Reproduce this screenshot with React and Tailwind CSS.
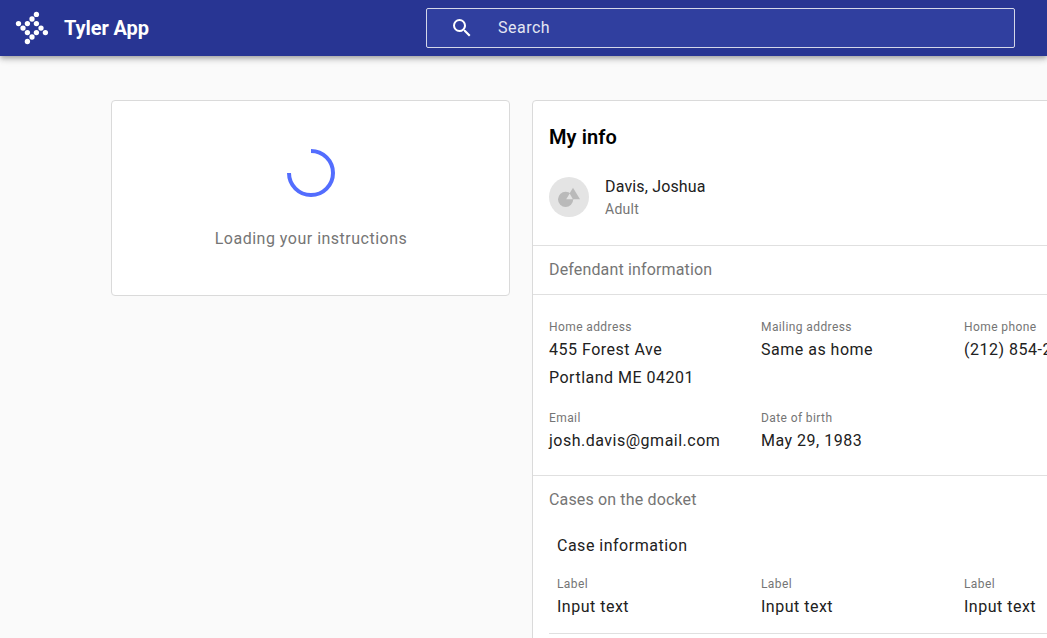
const DOTS = [
  [36.4, 14.4], [32, 19], [18.5, 23.6], [27.4, 23.6], [36.4, 23.6], [23, 28.1],
  [41, 28.1], [27.4, 32.6], [36.4, 32.6], [45.4, 32.6], [32, 37], [27.4, 41.5],
];

function Logo() {
  return (
    <svg className="size-8 shrink-0 overflow-visible" viewBox="16 12 32 32" fill="#fff">
      {DOTS.map(([x, y]) => (
        <circle key={`${x}-${y}`} cx={x} cy={y} r="2.65" />
      ))}
    </svg>
  );
}

function Field({ label, lines }) {
  return (
    <div className="whitespace-nowrap">
      <div className="text-[12px] leading-[18px] tracking-[0.4px] text-[#757575]">{label}</div>
      {lines.map((line) => (
        <div key={line} className="text-[16px] leading-[28px] tracking-[0.5px] text-[#212121]">
          {line}
        </div>
      ))}
    </div>
  );
}

function Header() {
  return (
    <header className="relative flex h-14 shrink-0 items-center bg-[#283593] pl-4 text-white shadow-[0_2px_4px_-1px_rgba(0,0,0,0.2),0_4px_5px_0_rgba(0,0,0,0.14),0_1px_10px_0_rgba(0,0,0,0.12)]">
      <Logo />
      <h1 className="ml-4 w-[362px] text-[20px] font-bold leading-8 tracking-[-0.1px]">Tyler App</h1>
      <div className="flex h-10 w-[589px] shrink-0 items-center rounded-[2px] border border-[#d4d7e9] bg-[#303f9f] pl-[23px]">
        <svg className="size-6" viewBox="0 0 24 24" fill="#fff">
          <path d="M9.5 3A6.5 6.5 0 0 1 16 9.5c0 1.61-.59 3.09-1.56 4.23l.27.27h.79l5 5-1.5 1.5-5-5v-.79l-.27-.27A6.516 6.516 0 0 1 9.5 16a6.5 6.5 0 0 1 0-13m0 2C7 5 5 7 5 9.5S7 14 9.5 14 14 12 14 9.5 12 5 9.5 5" />
        </svg>
        <span className="ml-6 text-[16px] leading-6 tracking-[0.5px] text-[#e4e6f2]">Search</span>
      </div>
    </header>
  );
}

export default function App() {
  return (
    <div className="flex h-[638px] w-full flex-col overflow-hidden bg-[#fafafa] font-['Roboto',sans-serif]">
      <Header />
      <main className="flex items-start gap-[22px] pl-[111px] pt-11">
        <section className="flex h-[196px] w-[399px] shrink-0 flex-col items-center rounded-[4px] border border-[#dadada] bg-white pt-12">
          <svg className="size-12" viewBox="0 0 48 48" fill="none">
            <path d="M24 2A22 22 0 1 1 2 24" stroke="#536dfe" strokeWidth="4" />
          </svg>
          <p className="mt-[30px] pl-px text-[16px] leading-6 tracking-[0.5px] text-[#757575]">Loading your instructions</p>
        </section>

        <section className="h-[640px] w-[640px] shrink-0 rounded-[4px] border border-[#dadada] bg-white">
          <div className="h-[145px] border-b border-[#e0e0e0] px-4 pt-5">
            <h2 className="text-[20px] font-semibold leading-8 tracking-[0.1px] text-black">My info</h2>
            <div className="mt-[22px] flex items-center gap-4">
              <svg className="size-10" viewBox="0 0 40 40">
                <circle cx="20" cy="20" r="20" fill="#e4e4e4" />
                <circle cx="16.6" cy="22.3" r="7.6" fill="#bababa" />
                <path d="M24 10.7L31 22.3H17z" fill="#bababa" />
                <path d="M20.700 16.500L23.900 22.300H17.200z" fill="#e4e4e4" />
              </svg>
              <div>
                <div className="text-[16px] leading-6 tracking-[0.15px] text-[#212121]">Davis, Joshua</div>
                <div className="text-[14px] leading-5 tracking-[0.25px] text-[#757575]">Adult</div>
              </div>
            </div>
          </div>
          <div className="flex h-[49px] items-center border-b border-[#e0e0e0] px-4 text-[16px] tracking-[0.15px] text-[#757575]">
            Defendant information
          </div>
          <div className="grid h-[181px] grid-cols-[212px_203px_190px] grid-rows-[91px_46px] border-b border-[#e0e0e0] pl-4 pt-[23px]">
            <Field label="Home address" lines={["455 Forest Ave", "Portland ME 04201"]} />
            <Field label="Mailing address" lines={["Same as home"]} />
            <Field label="Home phone" lines={["(212) 854-2611"]} />
            <Field label="Email" lines={["josh.davis@gmail.com"]} />
            <Field label="Date of birth" lines={["May 29, 1983"]} />
          </div>
          <div className="pl-4">
            <h3 className="pt-3 text-[16px] leading-6 tracking-[0.15px] text-[#757575]">Cases on the docket</h3>
            <div className="border-b border-[#e0e0e0] pb-3 pl-2 pt-[22px]">
              <h4 className="text-[16px] leading-6 tracking-[0.5px] text-[#212121]">Case information</h4>
              <div className="mt-[17px] grid grid-cols-[204px_203px_190px]">
                <Field label="Label" lines={["Input text"]} />
                <Field label="Label" lines={["Input text"]} />
                <Field label="Label" lines={["Input text"]} />
              </div>
            </div>
          </div>
        </section>
      </main>
    </div>
  );
}
